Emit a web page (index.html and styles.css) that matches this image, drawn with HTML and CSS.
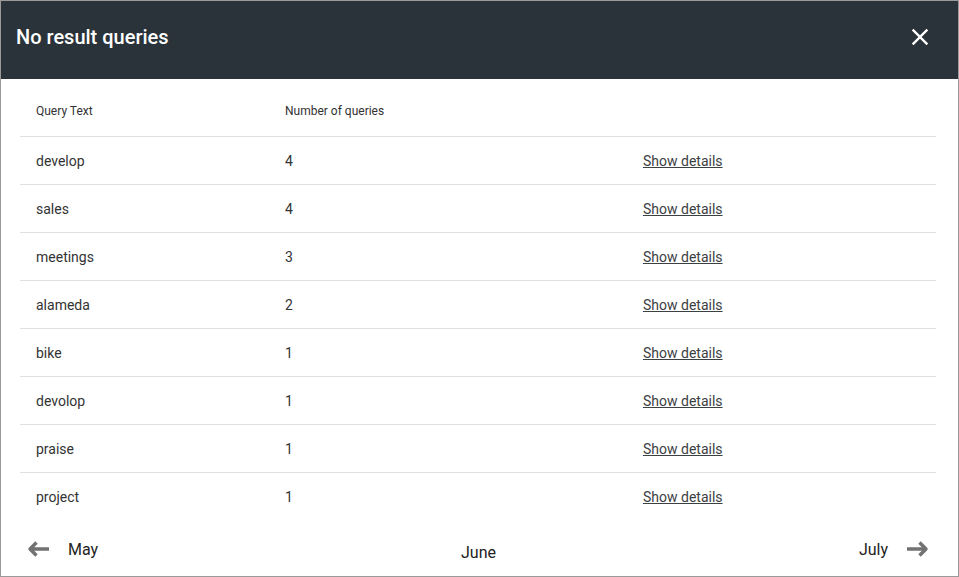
FILE: index.html
```html
<!DOCTYPE html>
<html>
<head>
<meta charset="utf-8">
<link rel="stylesheet" href="styles.css">
</head>
<body>
<div class="dialog">
  <header class="dialog-header">
    <h1 class="title">No result queries</h1>
    <button class="close" aria-label="Close">
      <svg viewBox="0 0 24 24" width="28" height="28"><path fill="#fff" d="M19 6.41L17.59 5 12 10.59 6.41 5 5 6.41 10.59 12 5 17.59 6.41 19 12 13.41 17.59 19 19 17.59 13.41 12z"/></svg>
    </button>
  </header>
  <div class="table">
    <div class="row head">
      <div class="cell">Query Text</div>
      <div class="cell">Number of queries</div>
      <div class="cell"></div>
    </div>
    <div class="row"><div class="cell">develop</div><div class="cell">4</div><div class="cell"><a class="link" href="#">Show details</a></div></div>
    <div class="row"><div class="cell">sales</div><div class="cell">4</div><div class="cell"><a class="link" href="#">Show details</a></div></div>
    <div class="row"><div class="cell">meetings</div><div class="cell">3</div><div class="cell"><a class="link" href="#">Show details</a></div></div>
    <div class="row"><div class="cell">alameda</div><div class="cell">2</div><div class="cell"><a class="link" href="#">Show details</a></div></div>
    <div class="row"><div class="cell">bike</div><div class="cell">1</div><div class="cell"><a class="link" href="#">Show details</a></div></div>
    <div class="row"><div class="cell">devolop</div><div class="cell">1</div><div class="cell"><a class="link" href="#">Show details</a></div></div>
    <div class="row"><div class="cell">praise</div><div class="cell">1</div><div class="cell"><a class="link" href="#">Show details</a></div></div>
    <div class="row last"><div class="cell">project</div><div class="cell">1</div><div class="cell"><a class="link" href="#">Show details</a></div></div>
  </div>
  <footer class="pager">
    <div class="pager-side">
      <svg class="arrow" viewBox="0 0 22 16" width="22" height="16"><path fill="none" stroke="#727272" stroke-width="3.4" stroke-linejoin="round" d="M22 8H3M9.5 1.5L3 8l6.5 6.5"/></svg>
      <span class="month">May</span>
    </div>
    <span class="month current">June</span>
    <div class="pager-side">
      <span class="month">July</span>
      <svg class="arrow" viewBox="0 0 22 16" width="22" height="16"><path fill="none" stroke="#727272" stroke-width="3.4" stroke-linejoin="round" d="M0 8h19M12.5 1.5L19 8l-6.5 6.5"/></svg>
    </div>
  </footer>
</div>
</body>
</html>
```

FILE: styles.css
```css
* { box-sizing: border-box; }
html, body { margin: 0; padding: 0; }
body {
  font-family: Roboto, "Liberation Sans", sans-serif;
  background: #fff;
}
.dialog {
  width: 959px;
  height: 577px;
  border: 1px solid #9a9a9a;
  display: flex;
  flex-direction: column;
  overflow: hidden;
}
.dialog-header {
  height: 78px;
  flex: none;
  background: #2a3339;
  display: flex;
  align-items: center;
  justify-content: space-between;
  padding: 0 24px 6px 15px;
}
.title {
  margin: 0;
  color: #fff;
  font-size: 20px;
  font-weight: 500;
  letter-spacing: 0;
}
.close {
  border: 0;
  background: transparent;
  padding: 0;
  width: 28px;
  height: 28px;
  display: flex;
  cursor: pointer;
}
.table {
  margin: 0 22px 0 19px;
}
.row {
  display: grid;
  grid-template-columns: 249px 358px 1fr;
  height: 48px;
  align-items: center;
  border-bottom: 1px solid #e0e0e0;
  font-size: 14px;
  color: #333;
}
.row.head {
  height: 58px;
  align-items: end;
  padding-bottom: 18px;
  font-size: 12px;
  color: #333;
}
.row.last { border-bottom: 0; }
.cell { padding-left: 16px; }
.link {
  color: #3c4043;
  text-decoration: underline;
}
.pager {
  flex: 1;
  display: flex;
  align-items: center;
  justify-content: space-between;
  padding: 4px 29px 0 26px;
}
.pager-side {
  display: flex;
  align-items: center;
  gap: 19px;
  margin-top: -3px;
}
.arrow { display: block; }
.month {
  font-size: 16px;
  color: #222;
}
.current { margin-left: 0; margin-top: 3px; }
```
